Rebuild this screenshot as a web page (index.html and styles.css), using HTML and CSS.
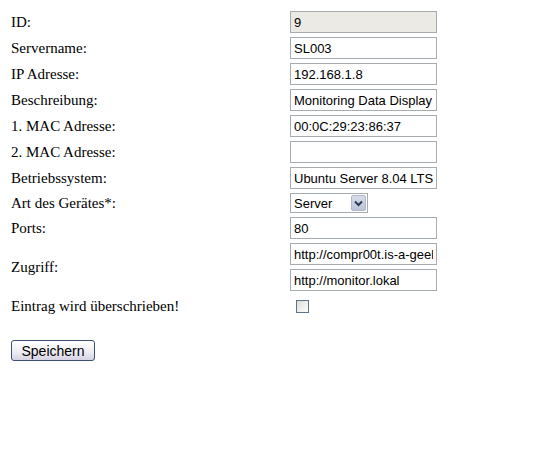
FILE: index.html
```html
<!DOCTYPE html>
<html>
<head>
<meta charset="utf-8">
<link rel="stylesheet" href="styles.css">
</head>
<body>
<form class="form">
  <div class="grid">
    <div class="label">ID:</div>
    <div class="field"><input class="input readonly" type="text" value="9" readonly></div>

    <div class="label">Servername:</div>
    <div class="field"><input class="input" type="text" value="SL003"></div>

    <div class="label">IP Adresse:</div>
    <div class="field"><input class="input" type="text" value="192.168.1.8"></div>

    <div class="label">Beschreibung:</div>
    <div class="field"><input class="input" type="text" value="Monitoring Data Display"></div>

    <div class="label">1. MAC Adresse:</div>
    <div class="field"><input class="input" type="text" value="00:0C:29:23:86:37"></div>

    <div class="label">2. MAC Adresse:</div>
    <div class="field"><input class="input" type="text" value=""></div>

    <div class="label">Betriebssystem:</div>
    <div class="field"><input class="input" type="text" value="Ubuntu Server 8.04 LTS"></div>

    <div class="label short">Art des Gerätes*:</div>
    <div class="field short">
      <div class="select">
        <span class="select-text">Server</span>
        <span class="select-btn">
          <svg width="9" height="7" viewBox="0 0 9 7"><path d="M1 1.5 L4.5 5 L8 1.5" fill="none" stroke="#2b3a55" stroke-width="2"/></svg>
        </span>
      </div>
    </div>

    <div class="label">Ports:</div>
    <div class="field"><input class="input" type="text" value="80"></div>

    <div class="label">Zugriff:</div>
    <div class="field stack">
      <input class="input" type="text" value="http://compr00t.is-a-geek.org">
      <input class="input" type="text" value="http://monitor.lokal">
    </div>

    <div class="label">Eintrag wird überschrieben!</div>
    <div class="field"><span class="checkbox"></span></div>
  </div>
  <div class="actions">
    <button class="button" type="button">Speichern</button>
  </div>
</form>
</body>
</html>
```
FILE: styles.css
```css
html, body {
  margin: 0;
  padding: 0;
  background: #ffffff;
}
.form {
  padding: 11px 0 0 11px;
  font-family: "Liberation Serif", "Times New Roman", serif;
  font-size: 15px;
  color: #000;
}
.grid {
  display: grid;
  grid-template-columns: 279px 147px;
  row-gap: 4px;
  align-items: center;
}
.label {
  line-height: 18px;
  min-height: 22px;
  display: flex;
  align-items: center;
}
.field {
  display: flex;
  align-items: center;
  min-height: 22px;
}
.label.short,
.field.short {
  min-height: 20px;
}
.stack {
  flex-direction: column;
  align-items: flex-start;
  gap: 4px;
}
.input {
  box-sizing: border-box;
  width: 147px;
  height: 22px;
  margin: 0;
  border: 1px solid #a5acb2;
  padding: 0 3px;
  font-family: "Liberation Sans", Arial, sans-serif;
  font-size: 13px;
  color: #000;
  background: #fff;
  outline: none;
}
.readonly {
  background: #ebeae5;
}
.select {
  box-sizing: border-box;
  width: 78px;
  height: 20px;
  border: 1px solid #a5acb2;
  display: flex;
  align-items: center;
  justify-content: space-between;
  padding: 1px 1px 1px 3px;
  font-family: "Liberation Sans", Arial, sans-serif;
  font-size: 13px;
  background: #fff;
}
.select-btn {
  box-sizing: border-box;
  width: 15px;
  height: 16px;
  border: 1px solid #b2b8cc;
  border-radius: 2px;
  background: linear-gradient(#d7dcea, #bcc3d6);
  display: flex;
  align-items: center;
  justify-content: center;
}
.checkbox {
  box-sizing: border-box;
  display: block;
  width: 13px;
  height: 13px;
  margin-left: 6px;
  border: 1px solid #5f7286;
  background: linear-gradient(135deg, #dcdcd7, #ffffff);
}
.actions {
  margin-top: 23px;
}
.button {
  box-sizing: border-box;
  width: 84px;
  height: 21px;
  margin: 0;
  padding: 0;
  border: 1px solid #3d4f73;
  border-radius: 3px;
  background: linear-gradient(#ffffff, #ecebf2 60%, #d6d2e2);
  font-family: "Liberation Sans", Arial, sans-serif;
  font-size: 14px;
  color: #000;
}
```
